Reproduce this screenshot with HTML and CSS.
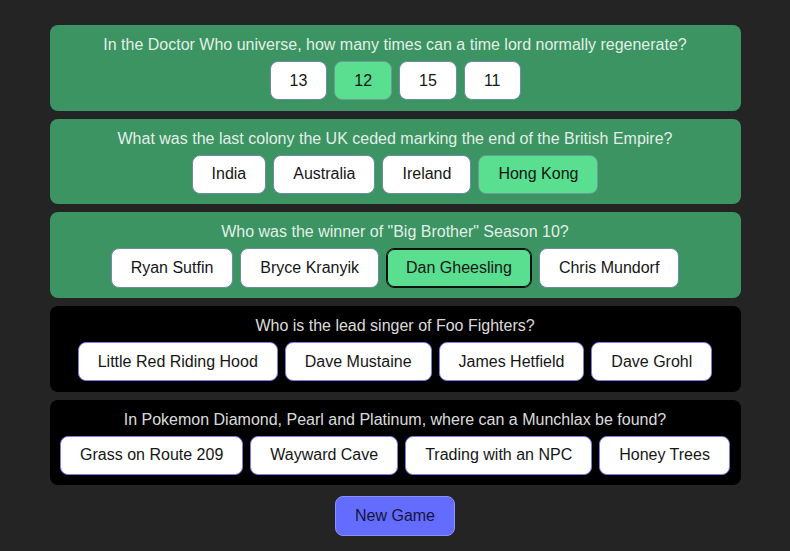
FILE: index.html
```html
<!DOCTYPE html>
<html lang="en">
<head>
<meta charset="utf-8">
<title>Trivia</title>
<link rel="stylesheet" href="styles.css">
</head>
<body>
<main class="game">
  <section class="card card-answered">
    <p class="question">In the Doctor Who universe, how many times can a time lord normally regenerate?</p>
    <div class="answers">
      <button class="answer">13</button>
      <button class="answer answer-correct">12</button>
      <button class="answer">15</button>
      <button class="answer">11</button>
    </div>
  </section>
  <section class="card card-answered">
    <p class="question">What was the last colony the UK ceded marking the end of the British Empire?</p>
    <div class="answers">
      <button class="answer">India</button>
      <button class="answer">Australia</button>
      <button class="answer">Ireland</button>
      <button class="answer answer-correct">Hong Kong</button>
    </div>
  </section>
  <section class="card card-answered">
    <p class="question">Who was the winner of "Big Brother" Season 10?</p>
    <div class="answers">
      <button class="answer">Ryan Sutfin</button>
      <button class="answer">Bryce Kranyik</button>
      <button class="answer answer-correct answer-picked">Dan Gheesling</button>
      <button class="answer">Chris Mundorf</button>
    </div>
  </section>
  <section class="card card-open">
    <p class="question">Who is the lead singer of Foo Fighters?</p>
    <div class="answers">
      <button class="answer">Little Red Riding Hood</button>
      <button class="answer">Dave Mustaine</button>
      <button class="answer">James Hetfield</button>
      <button class="answer">Dave Grohl</button>
    </div>
  </section>
  <section class="card card-open">
    <p class="question">In Pokemon Diamond, Pearl and Platinum, where can a Munchlax be found?</p>
    <div class="answers">
      <button class="answer">Grass on Route 209</button>
      <button class="answer">Wayward Cave</button>
      <button class="answer">Trading with an NPC</button>
      <button class="answer">Honey Trees</button>
    </div>
  </section>
  <div class="actions">
    <button class="new-game">New Game</button>
  </div>
</main>
</body>
</html>
```
FILE: styles.css
```css
html, body {
  margin: 0;
  padding: 0;
  background: #242424;
}

body {
  font-family: "Liberation Sans", Arial, sans-serif;
  font-size: 16px;
  color: rgba(255, 255, 255, 0.87);
}

.game {
  width: 691px;
  margin: 0 auto;
  padding-top: 25px;
  display: flex;
  flex-direction: column;
  gap: 8px;
}

.card {
  border-radius: 8px;
  padding: 8px 11px 10.5px;
  display: flex;
  flex-direction: column;
  align-items: center;
}

.card-answered {
  background: #3c9463;
}

.card-open {
  background: #000;
}

.question {
  margin: 0;
  line-height: 24px;
  text-align: center;
}

.answers {
  margin-top: 4px;
  display: flex;
  justify-content: center;
  gap: 7px;
}

.answer,
.new-game {
  flex-shrink: 0;
  white-space: nowrap;
  font-family: "Liberation Sans", Arial, sans-serif;
  font-size: 16px;
  line-height: 18px;
  padding: 9.6px 19px;
  border-radius: 8px;
  border: 1px solid #6f8aa6;
  background: #fff;
  color: #161616;
  cursor: pointer;
}

.card-open .answer {
  border-color: #7c7ce6;
}

.answer-correct {
  background: #5ade8f;
  border-color: #6f9a9a;
}

.answer-picked {
  border-color: #111;
  box-shadow: inset 0 0 0 1px #111;
}

.actions {
  display: flex;
  justify-content: center;
  margin-top: 3px;
}

.new-game {
  background: #646cff;
  border-color: #8a90ff;
  color: #14143c;
}
```
